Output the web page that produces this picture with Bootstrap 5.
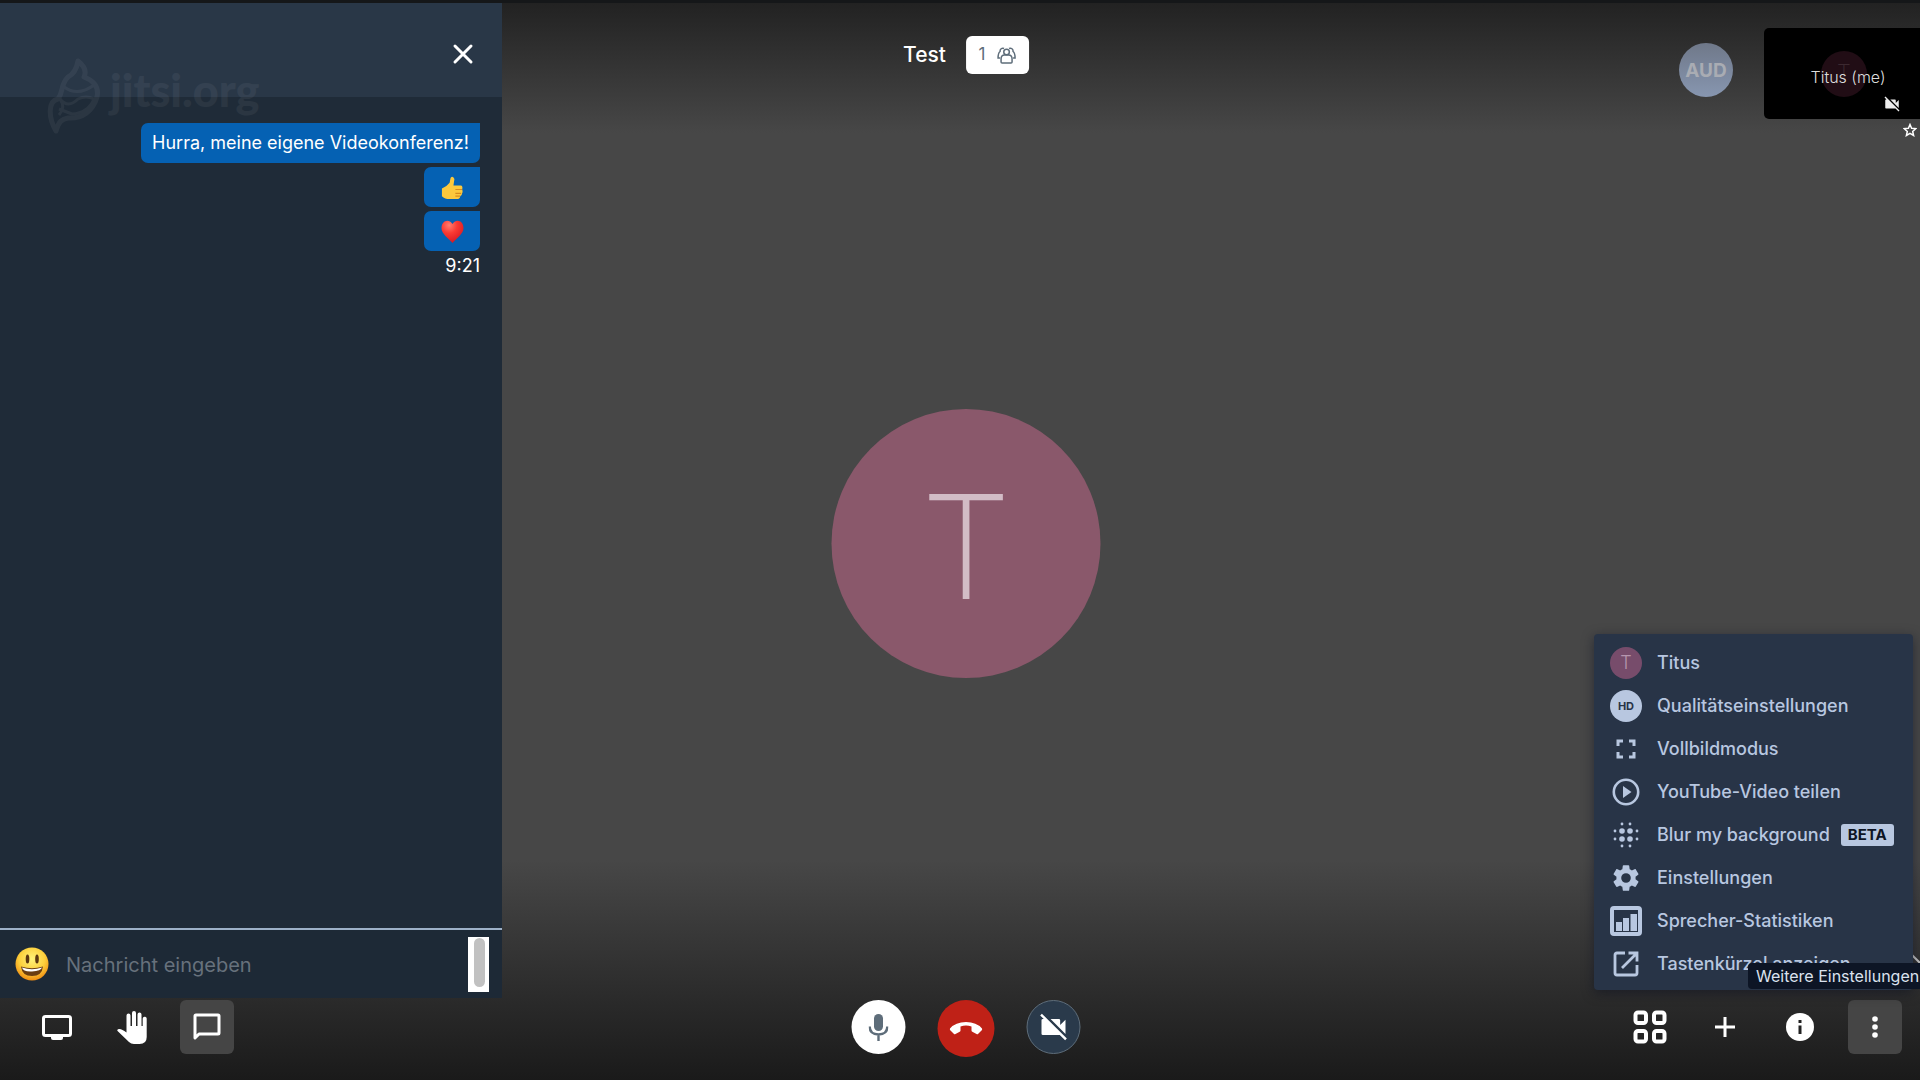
<!DOCTYPE html>
<html lang="de">
<head>
<meta charset="utf-8">
<meta name="viewport" content="width=device-width, initial-scale=1">
<title>Test | Jitsi Meet</title>
<link href="https://cdn.jsdelivr.net/npm/bootstrap@5.3.0/dist/css/bootstrap.min.css" rel="stylesheet">
<style>
body{font-family:Inter,"Liberation Sans",sans-serif;background:#474747;color:#fff;overflow:hidden}
.stage{width:calc(100% + 12px);background:linear-gradient(180deg,#222 0,#474747 130px,#474747 calc(100% - 220px),#1a1a1a 100%);border-top:3px solid #151719}
.btn{--bs-btn-border-width:0px}
.chat{width:502px;background:#1f2b38}
.chat-head{height:94px;background:#293747;padding:8px 28px 0 0}
.chat-body{padding:26px 22px 0 0}
.bubble{height:40px;padding:0 11px;background:#0561b3;border-radius:7px 0 7px 7px;font-size:18px;line-height:40px}
.bubble.emo{padding:2px 16px 0 17px}
.stamp{font-size:18px;line-height:22px}
.chat-form{height:70px;border-top:2px solid #9db1c8;background:#1d2936;padding:0 13px 0 14px}
.chat-form input{background:transparent;border:0;outline:0;color:#fff;font-size:20px;padding:2px 0 0}
.chat-form input::placeholder{color:#67717c;opacity:1}
.scroller{width:21px;height:55px;background:#fff;padding:1px 0 0 6px}
.scroller span{display:block;width:11px;height:49px;border-radius:6px;background:#c1c1c1}
.logo{left:44px;top:46px;opacity:.05;width:222px;height:92px}
.logo text{font:900 45px Lato,sans-serif;fill:#fff}
.subject{top:33px;gap:20px}
.subject h1{font-size:21px;line-height:38px}
.count{width:63px;height:38px;border-radius:6px;background:#fff;color:#5e6d7a;font-size:17px;gap:12px}
.count:hover{background:#eee}
.center-face{padding-top:3px}
.face{width:269px;height:269px;background:#8a586b;color:#d2bcc6;font:200 144px/275px Inter,Lato,sans-serif}
.bar{height:82px;padding:2px 30px 0}
.side{gap:21px}
.calls{gap:32px}
.tool{width:54px;height:54px;border-radius:6px;color:#fff;display:flex;align-items:center;justify-content:center;padding:0}
.tool.on{background:#454545}
.tool.mic,.tool.cam,.tool.hang{border-radius:50%}
.hang{width:57px;height:57px;background:#bf2117}
.mic{background:#fff;color:#5e6d7a}
.cam{background:#2a3a4b;border:1px solid #5e6d7a}
.films{top:25px;right:0}
.aud{width:54px;height:54px;margin:15px 31px 0 0;padding-top:2px;background:linear-gradient(#6f7889,#8796b0);color:#a9acb3;font-size:19px;font-weight:700}
.tile{width:168px;height:91px;background:#000;border-radius:5px}
.tile .dim{width:46px;height:46px;left:57px;top:23px;background:#210d15;color:#3c2930;font:200 22px/42px Inter,sans-serif}
.tile .who{font-size:16px;font-weight:300;line-height:98px;height:91px;color:#ddd}
.tile .mute{right:31px;bottom:6px}
.star{margin:4px 15px 0 0}
.more{right:7px;bottom:90px;width:319px;background:#283447;border-radius:4px;padding:7px 0 5px;box-shadow:0 3px 12px rgba(10,14,30,.5)}
.more .btn{height:43px;padding:0 16px;gap:15px;color:#b8c7e0;font-size:18px;font-weight:500;line-height:24px;border-radius:0}
.slot{width:32px;height:32px;flex:none}
.slot.me{background:#774c6b;color:#b696ae;font-size:18px;font-weight:300}
.slot.hd{background:#b8c7e0;color:#283447;font-size:11px;font-weight:700}
.beta{background:#b8c7e0;color:#0d1424;font-size:15px;font-weight:700;line-height:22px;padding:0 7px;border-radius:3px;margin-left:-4px}
.hint{right:0;bottom:91px;width:172px;height:26px;background:#0d1525;color:#dbe2ee;font-size:16px;line-height:26px;padding:0 0 0 8px;border-radius:4px 0 0 4px}
.filmtoggle{right:0;bottom:108px}
</style>
<script src="https://cdn.jsdelivr.net/npm/bootstrap@5.3.0/dist/js/bootstrap.bundle.min.js"></script>
</head>
<body>
<svg class="d-none"><symbol id="camoff" viewBox="0 0 24 24"><path d="M3.300 2L2 3.300 4.700 6H4Q3 6 3 7V17Q3 18 4 18H16.700L20.700 22 22 20.700ZM21 6.500L17 10.500V7Q17 6 16 6H9.800L21 17.200Z"/></symbol></svg>
<main class="stage position-relative vh-100 d-flex flex-column">
  <div class="flex-grow-1 d-flex">
    <aside class="chat d-flex flex-column position-relative">
      <header class="chat-head d-flex align-items-center justify-content-end">
        <button class="btn p-0 d-flex" aria-label="Schließen"><svg width="22" height="22" viewBox="0 0 22 22" stroke="#fff" stroke-width="3" stroke-linecap="round"><path d="M3 3l16 16M19 3L3 19"/></svg></button>
      </header>
      <section class="chat-body flex-grow-1 d-flex flex-column align-items-end gap-1">
        <div class="bubble">Hurra, meine eigene Videokonferenz!</div>
        <div class="bubble emo d-flex align-items-center"><svg width="23" height="25" viewBox="0 0 22 26" role="img" aria-label="Daumen hoch"><path d="M0 13Q5 11 8 7L9 2Q11-1 13 3L12 10H20Q22 11 21 14Q22 16 21 18Q21 20 19 21Q19 24 15 24H8Q3 24 0 21Z" fill="#fcc83d"/><path d="M14 14H21M14 18H20M14 21H19" stroke="#d68a1c" stroke-width="1.200"/></svg></div>
        <div class="bubble emo d-flex align-items-center"><svg width="23" height="24" viewBox="0 0 22 24" role="img" aria-label="Herz"><defs><radialGradient id="h" cx=".35" cy=".2" r=".9"><stop offset="0" stop-color="#ff7d70"/><stop offset=".4" stop-color="#fa3a33"/><stop offset="1" stop-color="#cf1220"/></radialGradient></defs><path d="M11 4C7-2 0 1 0 8C0 14 7 18 11 23C15 18 22 14 22 8C22 1 15-2 11 4Z" fill="url(#h)"/></svg></div>
        <time class="stamp">9:21</time>
      </section>
      <form class="chat-form d-flex align-items-center">
        <button type="button" class="btn p-0 d-flex" aria-label="Emoji"><svg width="36" height="34" viewBox="0 0 36 34"><defs><radialGradient id="s" cx=".5" cy=".35" r=".65"><stop offset="0" stop-color="#fff27a"/><stop offset=".6" stop-color="#fdcf3b"/><stop offset="1" stop-color="#ef8d13"/></radialGradient></defs><circle cx="18" cy="17" r="16.500" fill="url(#s)"/><ellipse cx="13.500" cy="12" rx="1.800" ry="4.500" fill="#5b3510"/><ellipse cx="23" cy="12" rx="1.800" ry="4.500" fill="#5b3510"/><path d="M7 19.500Q18 23 29 19.500Q28 29 18 29T7 19.500" fill="#6b3d11"/><path d="M8 20.500Q18 24 28 20.500Q27 24 18 24.500T8 20.500" fill="#fff"/></svg></button>
        <input class="flex-grow-1 ms-3" type="text" aria-label="Nachricht" placeholder="Nachricht eingeben">
        <div class="scroller"><span></span></div>
      </form>
      <svg class="logo position-absolute" viewBox="0 0 222 92" role="img" aria-label="jitsi.org"><g fill="none" stroke="#fff" stroke-width="5" stroke-linejoin="round"><path d="M12 82C4 68 4 52 14 50C20 42 16 36 24 28Q32 24 34 12Q44 20 40 28Q56 34 53 48C49 62 38 70 24 69C18 70 15 72 12 82Z"/><path d="M16 50Q22 58 15 66M16 50Q24 60 34 50Q42 46 50 50Q44 64 28 65L15 60M20 38Q34 48 50 36" stroke-width="3"/></g><text x="66" y="58">jitsi.org</text></svg>
    </aside>
  </div>

  <nav class="bar d-flex justify-content-between">
    <div class="side d-flex">
      <button class="tool btn" aria-label="Bildschirm freigeben"><svg width="30" height="25" viewBox="0 0 30 25"><rect x="1.500" y="1.500" width="27" height="19" rx="2" fill="none" stroke="#fff" stroke-width="3"/><path d="M9 20H21V23Q21 25 19 25H11Q9 25 9 23Z" fill="#fff"/></svg></button>
      <button class="tool btn" aria-label="Hand heben"><svg width="30" height="33" viewBox="0 0 30 33" fill="#fff"><path d="M9.500 19V4.500Q9.500 2.500 11.500 2.500T13.500 4.500V15H15V2Q15 0 17 0T19 2V15H20.500V3.500Q20.500 1.500 22.500 1.500T24.500 3.500V15H25.700V7.500Q25.700 5.700 27.700 5.700T29.700 7.500V26Q29.700 33 22.500 33H17Q14 33 12 31L.3 19.800Q0 18 2.500 18Q5 18 9.500 21.500Z"/></svg></button>
      <button class="tool on btn" aria-label="Chat"><svg width="28" height="28" viewBox="0 0 28 28"><path fill="none" stroke="#fff" stroke-width="3" stroke-linejoin="round" d="M2 25V3Q2 2 3 2H25Q26 2 26 3V20Q26 21 25 21H6Z"/></svg></button>
    </div>
    <div class="side d-flex">
      <button class="tool btn" aria-label="Kachelansicht"><svg width="34" height="34" viewBox="0 0 34 34" fill="none" stroke="#fff" stroke-width="4"><rect x="2.500" y="2.500" width="10.500" height="10.500" rx="2.500"/><rect x="21" y="2.500" width="10.500" height="10.500" rx="2.500"/><rect x="2.500" y="21" width="10.500" height="10.500" rx="2.500"/><rect x="21" y="21" width="10.500" height="10.500" rx="2.500"/></svg></button>
      <button class="tool btn" aria-label="Personen einladen"><svg width="20" height="20" viewBox="0 0 20 20" stroke="#fff" stroke-width="3"><path d="M10 0V20M0 10H20"/></svg></button>
      <button class="tool btn" aria-label="Info"><svg width="28" height="28" viewBox="0 0 28 28"><circle cx="14" cy="14" r="14" fill="#fff"/><path d="M14 7V10M14 12.500V21" stroke="#222" stroke-width="3"/></svg></button>
      <button class="tool on btn" aria-label="Weitere Einstellungen"><svg width="6" height="22" viewBox="0 0 6 22" fill="#fff"><circle cx="3" cy="3" r="2.800"/><circle cx="3" cy="11" r="2.800"/><circle cx="3" cy="19" r="2.800"/></svg></button>
    </div>
    <div class="calls d-flex position-absolute start-50 translate-middle-x">
      <button class="tool mic btn" aria-label="Mikrofon"><svg width="20" height="27" viewBox="0 0 20 27"><rect x="5.500" y="0" width="9" height="17" rx="4.500" fill="currentColor"/><path d="M1.200 12.500Q1.200 20.500 10 20.500T18.800 12.500M10 20.500V27" fill="none" stroke="currentColor" stroke-width="2.400"/></svg></button>
      <button class="tool hang btn" aria-label="Auflegen"><svg width="33" height="13" viewBox="0 0 33 13" fill="#fff"><path d="M16.500 0Q27 0 32.500 6.500Q33 7.300 32.500 8L28.500 12Q28 12.500 27 12L22.800 9.800Q22 9.400 22 8.500V4.500Q16.500 2.600 11 4.500V8.500Q11 9.400 10.200 9.800L6 12Q5 12.500 4.500 12L.5 8Q0 7.300.5 6.500Q6 0 16.500 0Z"/></svg></button>
      <button class="tool cam btn" aria-label="Kamera"><svg width="32" height="32" fill="#fff"><use href="#camoff"/></svg></button>
    </div>
  </nav>

  <div class="center-face position-absolute top-50 start-50 translate-middle"><div class="face rounded-circle text-center">T</div></div>

  <header class="subject position-absolute start-50 translate-middle-x d-flex align-items-center">
    <h1 class="m-0 fw-medium">Test</h1>
    <button class="count btn p-0 d-flex align-items-center justify-content-center" aria-label="Teilnehmer: 1"><span>1</span><svg width="19" height="18" viewBox="0 0 19 18" fill="none" stroke="currentColor" stroke-width="1.500"><circle cx="9.500" cy="6" r="2.800"/><path d="M4 16V13Q4 9 7.500 9H11.500Q15 9 15 13V16Q15 17 14 17H5Q4 17 4 16ZM7 2.500A2.800 2.800 0 0 0 3 5.500Q1 7 1 12H3M12 2.500A2.800 2.800 0 0 1 16 5.500Q18 7 18 12H16"/></svg></button>
  </header>

  <section class="films position-absolute d-flex">
    <div class="aud rounded-circle d-flex align-items-center justify-content-center">AUD</div>
    <div class="d-flex flex-column align-items-end">
      <div class="tile position-relative text-center">
        <div class="dim rounded-circle position-absolute">T</div>
        <div class="who position-relative">Titus (me)</div>
        <svg class="mute position-absolute" width="18" height="18" fill="#eee"><use href="#camoff"/></svg>
      </div>
      <svg class="star" width="14" height="14" viewBox="0 0 14 14" fill="none" stroke="#fff" stroke-width="1.500"><path d="M7 1.500L8.600 5.200 12.800 5.600 9.700 8.400 10.600 12.500 7 10.300 3.400 12.500 4.300 8.400 1.200 5.600 5.400 5.200Z"/></svg>
    </div>
  </section>
</main>

<svg class="filmtoggle position-absolute" width="8" height="18" viewBox="0 0 8 18" fill="none" stroke="#c4c4c4" stroke-width="2"><path d="M0 1L8 9"/></svg>
<div class="more position-absolute">
  <ul class="list-unstyled m-0">
    <li><button class="btn w-100 d-flex align-items-center"><span class="slot me rounded-circle d-flex align-items-center justify-content-center">T</span>Titus</button></li>
    <li><button class="btn w-100 d-flex align-items-center"><span class="slot hd rounded-circle d-flex align-items-center justify-content-center">HD</span>Qualitätseinstellungen</button></li>
    <li><button class="btn w-100 d-flex align-items-center"><svg class="slot" viewBox="0 0 32 32" fill="none" stroke="currentColor" stroke-width="3"><path d="M8 13V8H13M19 8H24V13M24 19V24H19M13 24H8V19"/></svg>Vollbildmodus</button></li>
    <li><button class="btn w-100 d-flex align-items-center"><svg class="slot" viewBox="0 0 32 32"><circle cx="16" cy="16" r="12.200" fill="none" stroke="currentColor" stroke-width="2.600"/><path d="M13 10L21.500 16 13 22Z" fill="currentColor"/></svg>YouTube-Video teilen</button></li>
    <li><button class="btn w-100 d-flex align-items-center"><svg class="slot" viewBox="0 0 32 32" fill="currentColor"><circle cx="12" cy="12" r="2.800"/><circle cx="20" cy="12" r="2.800"/><circle cx="12" cy="20" r="2.800"/><circle cx="20" cy="20" r="2.800"/><circle cx="12" cy="5" r="1.400"/><circle cx="20" cy="5" r="1.400"/><circle cx="12" cy="27" r="1.400"/><circle cx="20" cy="27" r="1.400"/><circle cx="5" cy="12" r="1.400"/><circle cx="5" cy="20" r="1.400"/><circle cx="27" cy="12" r="1.400"/><circle cx="27" cy="20" r="1.400"/></svg>Blur my background<span class="beta">BETA</span></button></li>
    <li><button class="btn w-100 d-flex align-items-center"><svg class="slot" viewBox="0 0 24 24" fill="currentColor"><path d="M19.140 12.940c.04-.3.060-.61.060-.94s-.02-.64-.07-.94l2.030-1.580c.18-.14.230-.41.120-.61l-1.920-3.320c-.12-.22-.37-.29-.59-.22l-2.390.96c-.5-.38-1.030-.7-1.620-.94L14.400 2.810c-.04-.24-.24-.41-.48-.41h-3.840c-.24 0-.43.17-.47.41L9.250 5.350c-.59.24-1.130.57-1.620.94l-2.390-.96c-.22-.08-.47 0-.59.22L2.740 8.870c-.12.210-.08.470.12.610l2.030 1.580c-.05.3-.09.630-.09.940s.02.640.07.940l-2.030 1.580c-.18.140-.23.410-.12.610l1.920 3.320c.12.220.37.290.59.220l2.390-.96c.5.380 1.030.7 1.620.94l.36 2.540c.05.240.24.410.48.410h3.840c.24 0 .44-.17.470-.41l.36-2.540c.59-.24 1.130-.56 1.620-.94l2.390.96c.22.080.47 0 .59-.22l1.920-3.320c.12-.22.070-.47-.12-.61ZM12 15.600A3.600 3.600 0 1 1 12 8.400a3.600 3.600 0 0 1 0 7.200Z"/></svg>Einstellungen</button></li>
    <li><button class="btn w-100 d-flex align-items-center"><svg class="slot" viewBox="0 0 32 32" fill="currentColor"><rect x="2" y="3" width="28" height="26" rx="2" fill="none" stroke="currentColor" stroke-width="4"/><path d="M6 17H12V26H6ZM13 13H19V26H13ZM20.500 9H27V26H20.500Z"/></svg>Sprecher-Statistiken</button></li>
    <li><button class="btn w-100 d-flex align-items-center"><svg class="slot" viewBox="0 0 32 32" fill="none" stroke="currentColor" stroke-width="2.800"><path d="M15 5H7Q5 5 5 7V25Q5 27 7 27H25Q27 27 27 25V17M18.500 5H27V13.500M27 5L12 20"/></svg>Tastenkürzel anzeigen</button></li>
  </ul>
</div>
<div class="hint position-absolute text-nowrap overflow-hidden" role="tooltip">Weitere Einstellungen</div>
</body>
</html>
